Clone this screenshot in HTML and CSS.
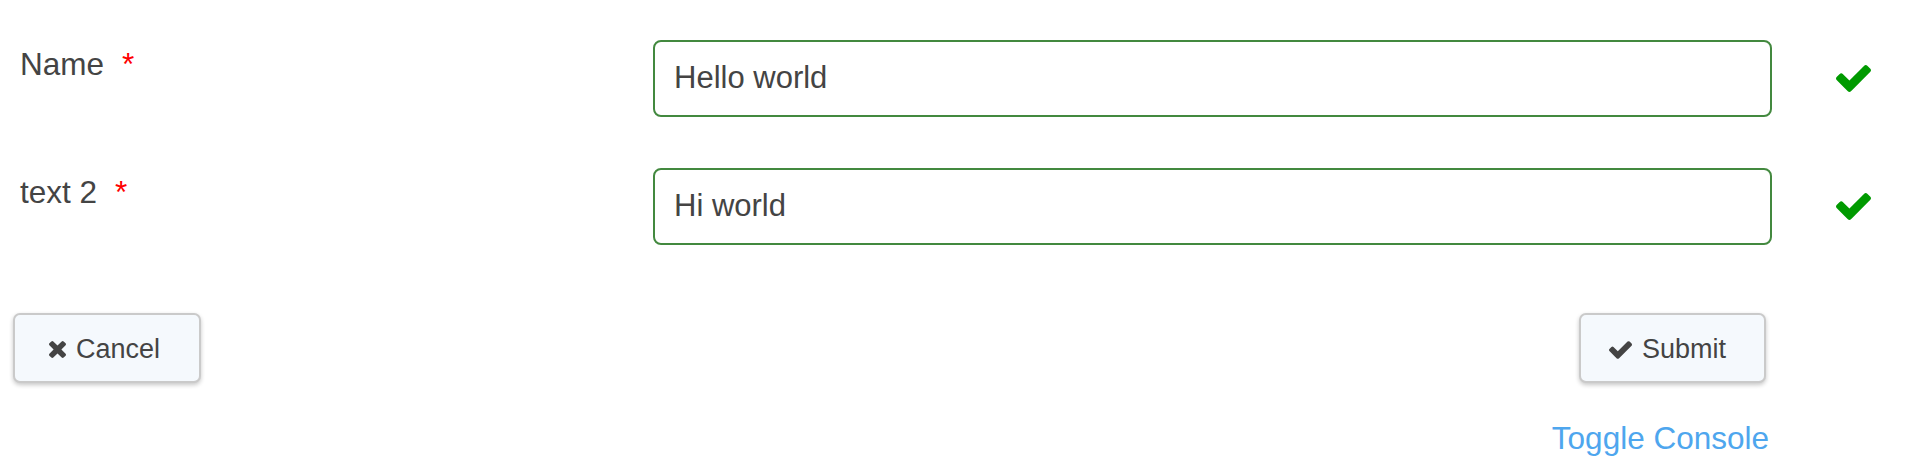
FILE: index.html
```html
<!DOCTYPE html>
<html lang="en">
<head>
    <meta charset="UTF-8">
    <meta name="viewport" content="width=device-width, initial-scale=1.0">
    <title>Form</title>
    <link rel="stylesheet" href="styles.css">
</head>
<body>
    <form class="form" onsubmit="return false">
        <div class="field">
            <label class="field-label" for="name">Name<span class="required">*</span></label>
            <input class="field-input" id="name" type="text" value="Hello world">
            <div class="field-status">
                <svg class="icon-ok" viewBox="121 334 1550 1188"><path d="M1671 566q0 40-28 68l-724 724-136 136q-28 28-68 28t-68-28l-136-136-362-362q-28-28-28-68t28-68l136-136q28-28 68-28t68 28l294 295 656-657q28-28 68-28t68 28l136 136q28 28 28 68z"/></svg>
            </div>
        </div>

        <div class="field">
            <label class="field-label" for="text2">text 2<span class="required">*</span></label>
            <input class="field-input" id="text2" type="text" value="Hi world">
            <div class="field-status">
                <svg class="icon-ok" viewBox="121 334 1550 1188"><path d="M1671 566q0 40-28 68l-724 724-136 136q-28 28-68 28t-68-28l-136-136-362-362q-28-28-28-68t28-68l136-136q28-28 68-28t68 28l294 295 656-657q28-28 68-28t68 28l136 136q28 28 28 68z"/></svg>
            </div>
        </div>

        <div class="actions">
            <button type="button" class="btn btn-cancel">
                <svg class="icon-times" viewBox="110 366 1188 1188"><path d="M1298 1322q0 40-28 68l-136 136q-28 28-68 28t-68-28l-294-294-294 294q-28 28-68 28t-68-28l-136-136q-28-28-28-68t28-68l294-294-294-294q-28-28-28-68t28-68l136-136q28-28 68-28t68 28l294 294 294-294q28-28 68-28t68 28l136 136q28 28 28 68t-28 68l-294 294 294 294q28 28 28 68z"/></svg>
                Cancel
            </button>
            <button type="submit" class="btn btn-submit">
                <svg class="icon-check" viewBox="121 334 1550 1188"><path d="M1671 566q0 40-28 68l-724 724-136 136q-28 28-68 28t-68-28l-136-136-362-362q-28-28-28-68t28-68l136-136q28-28 68-28t68 28l294 295 656-657q28-28 68-28t68 28l136 136q28 28 28 68z"/></svg>
                Submit
            </button>
        </div>

        <div class="console-link">
            <a href="#" onclick="return false">Toggle Console</a>
        </div>
    </form>
</body>
</html>
```

FILE: styles.css
```css
body {
    margin: 0;
    font-family: "Liberation Sans", Arial, sans-serif;
    color: #444;
    background: #fff;
}
.form {
    padding-top: 40px;
}
.field {
    display: grid;
    grid-template-columns: 633px 1119px 1fr;
    align-items: start;
    padding-left: 20px;
}
.field + .field {
    margin-top: 51px;
}
.field-label {
    font-size: 31.5px;
    line-height: 42px;
    padding-top: 3px;
}
.required {
    color: #f00;
    margin-left: 18px;
}
.field-input {
    box-sizing: border-box;
    height: 77px;
    width: 100%;
    margin: 0;
    padding: 0 19px 2px;
    border: 2px solid #43893f;
    border-radius: 8px;
    font-family: "Liberation Sans", Arial, sans-serif;
    font-size: 31px;
    color: #444;
    background: #fff;
    outline: none;
}
.field-status {
    align-self: center;
    display: flex;
    padding-left: 64px;
}
.icon-ok {
    width: 35px;
    height: 27px;
    fill: #009a00;
}
.actions {
    display: flex;
    justify-content: space-between;
    margin-top: 68px;
    padding: 0 156px 0 13px;
}
.btn {
    display: inline-flex;
    align-items: center;
    gap: 10px;
    height: 70px;
    box-sizing: border-box;
    padding: 3px 39px 0 34px;
    background: #f5f9fd;
    border: 2px solid #cacaca;
    border-radius: 7px;
    box-shadow: 0 2px 4px rgba(0,0,0,0.22);
    font-family: "Liberation Sans", Arial, sans-serif;
    font-size: 27px;
    color: #444;
    cursor: pointer;
}
.btn-submit {
    padding: 3px 38px 0 28px;
}
.btn svg {
    fill: #444;
}
.icon-times {
    width: 17px;
    height: 17px;
}
.icon-check {
    width: 23px;
    height: 18px;
}
.console-link {
    margin-top: 34px;
    padding-right: 153px;
    text-align: right;
    font-size: 31.5px;
    line-height: 42px;
}
.console-link a {
    color: #4ea6ee;
    text-decoration: none;
}
```
